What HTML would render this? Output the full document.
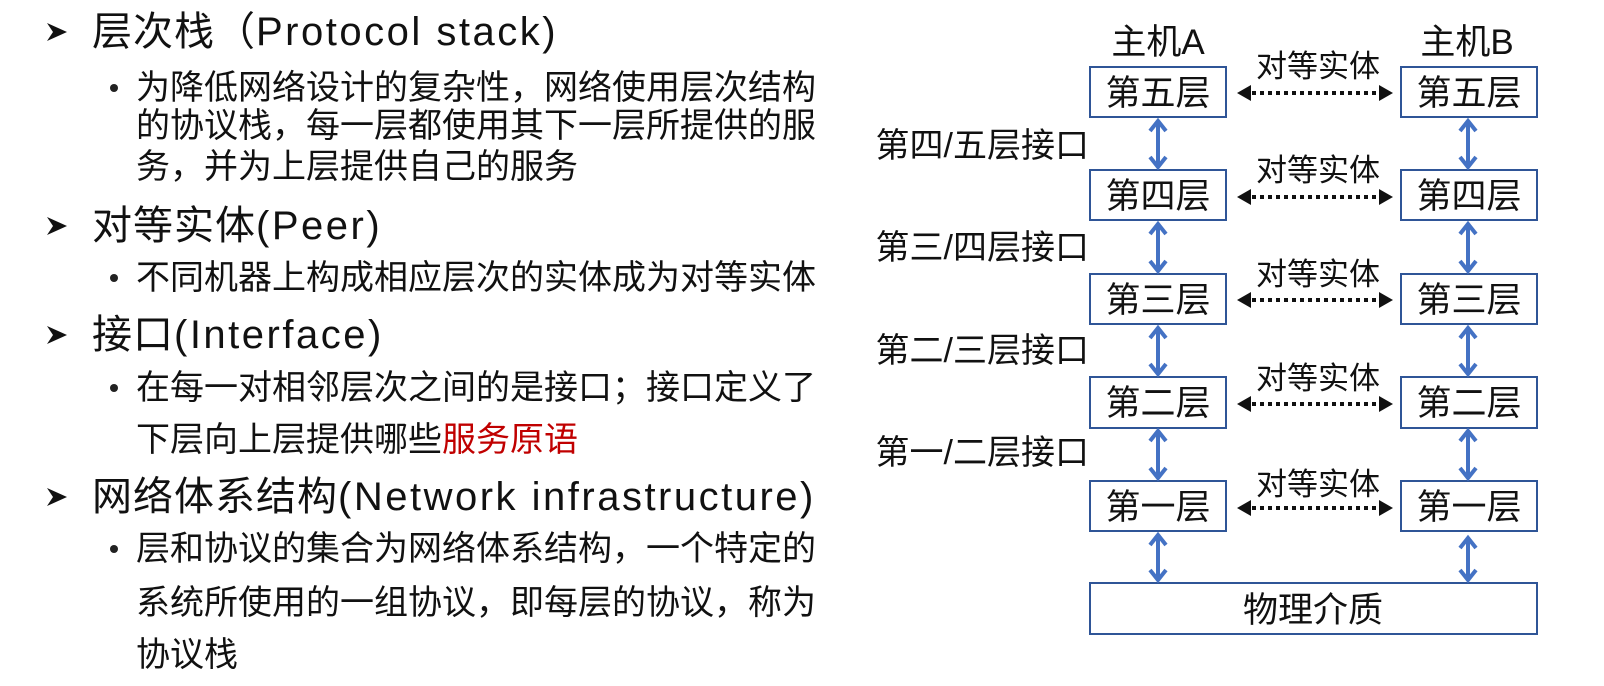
<!DOCTYPE html>
<html><head><meta charset="utf-8"><style>
body{margin:0;width:1604px;height:686px;background:#fff;overflow:hidden;position:relative;font-family:"Liberation Sans","Noto Sans CJK SC",sans-serif;color:#111}
.l{position:absolute;white-space:nowrap}
.h{font-size:40px;line-height:48px;left:92px;letter-spacing:1px}
.h .e{letter-spacing:2.5px}
.b{font-size:34px;line-height:42px;left:136px}
.ar{position:absolute;left:46px;width:22px;height:22px}
.dot{position:absolute;left:110px;width:8px;height:8px;border-radius:50%;background:#222}
</style></head><body>
<svg class="ar" style="top:21px" viewBox="0 0 22 22"><path d="M1 2 L21 11 L1 20 L7 11 Z" fill="#111"/></svg>
<div class="l h" style="top:8px">层次栈（<span class="e">Protocol stack)</span></div>
<div class="dot" style="top:84px"></div>
<div class="l b" style="top:67px">为降低网络设计的复杂性，网络使用层次结构</div>
<div class="l b" style="top:105px">的协议栈，每一层都使用其下一层所提供的服</div>
<div class="l b" style="top:146px">务，并为上层提供自己的服务</div>
<svg class="ar" style="top:215px" viewBox="0 0 22 22"><path d="M1 2 L21 11 L1 20 L7 11 Z" fill="#111"/></svg>
<div class="l h" style="top:202px">对等实体<span class="e">(Peer)</span></div>
<div class="dot" style="top:274px"></div>
<div class="l b" style="top:257px">不同机器上构成相应层次的实体成为对等实体</div>
<svg class="ar" style="top:324px" viewBox="0 0 22 22"><path d="M1 2 L21 11 L1 20 L7 11 Z" fill="#111"/></svg>
<div class="l h" style="top:311px">接口<span class="e">(Interface)</span></div>
<div class="dot" style="top:384px"></div>
<div class="l b" style="top:367px">在每一对相邻层次之间的是接口；接口定义了</div>
<div class="l b" style="top:419px">下层向上层提供哪些<span style="color:#c00000">服务原语</span></div>
<svg class="ar" style="top:486px" viewBox="0 0 22 22"><path d="M1 2 L21 11 L1 20 L7 11 Z" fill="#111"/></svg>
<div class="l h" style="top:473px">网络体系结构<span class="e">(Network infrastructure)</span></div>
<div class="dot" style="top:545px"></div>
<div class="l b" style="top:528px">层和协议的集合为网络体系结构，一个特定的</div>
<div class="l b" style="top:582px">系统所使用的一组协议，即每层的协议，称为</div>
<div class="l b" style="top:634px">协议栈</div>

<svg style="position:absolute;left:0;top:0" width="1604" height="686" font-family="Liberation Sans, Noto Sans CJK SC, sans-serif">
<g fill="#fff" stroke="#2f5597" stroke-width="2">
<rect x="1090" y="67" width="136" height="50"/><rect x="1090" y="170" width="136" height="50"/><rect x="1090" y="274" width="136" height="50"/><rect x="1090" y="377" width="136" height="51"/><rect x="1090" y="481" width="136" height="50"/>
<rect x="1401" y="67" width="136" height="50"/><rect x="1401" y="170" width="136" height="50"/><rect x="1401" y="274" width="136" height="50"/><rect x="1401" y="377" width="136" height="51"/><rect x="1401" y="481" width="136" height="50"/>
<rect x="1090" y="583" width="447" height="51"/>
</g>
<g font-size="35" text-anchor="middle" fill="#111">
<text x="1158" y="105">第五层</text><text x="1158" y="208">第四层</text><text x="1158" y="312">第三层</text><text x="1158" y="415">第二层</text><text x="1158" y="519">第一层</text>
<text x="1469" y="105">第五层</text><text x="1469" y="208">第四层</text><text x="1469" y="312">第三层</text><text x="1469" y="415">第二层</text><text x="1469" y="519">第一层</text>
<text x="1313" y="622">物理介质</text>
<text x="1158" y="54">主机A</text><text x="1467" y="54">主机B</text>
</g>
<g font-size="31" text-anchor="middle" fill="#111">
<text x="1318" y="77">对等实体</text><text x="1318" y="181">对等实体</text><text x="1318" y="285">对等实体</text><text x="1318" y="389">对等实体</text><text x="1318" y="495">对等实体</text>
</g>
<g font-size="34" text-anchor="end" fill="#111">
<text x="1089" y="157">第四/五层接口</text><text x="1089" y="259">第三/四层接口</text><text x="1089" y="362">第二/三层接口</text><text x="1089" y="464">第一/二层接口</text>
</g>
<g stroke="#111" stroke-width="4" stroke-dasharray="4 4" fill="none">
<line x1="1252" y1="93" x2="1378" y2="93"/><line x1="1252" y1="197" x2="1378" y2="197"/><line x1="1252" y1="300" x2="1378" y2="300"/><line x1="1252" y1="404" x2="1378" y2="404"/><line x1="1252" y1="508" x2="1378" y2="508"/>
</g>
<g fill="#111">
<path d="M1237 93 l14 -8 v16 z M1393 93 l-14 -8 v16 z"/>
<path d="M1237 197 l14 -8 v16 z M1393 197 l-14 -8 v16 z"/>
<path d="M1237 300 l14 -8 v16 z M1393 300 l-14 -8 v16 z"/>
<path d="M1237 404 l14 -8 v16 z M1393 404 l-14 -8 v16 z"/>
<path d="M1237 508 l14 -8 v16 z M1393 508 l-14 -8 v16 z"/>
</g>
<g stroke="#4472c4" stroke-width="4" fill="none">
<path d="M1158 121 V167 M1150 131 L1158 121 L1166 131 M1150 157 L1158 167 L1166 157"/>
<path d="M1158 224 V271 M1150 234 L1158 224 L1166 234 M1150 261 L1158 271 L1166 261"/>
<path d="M1158 328 V374 M1150 338 L1158 328 L1166 338 M1150 364 L1158 374 L1166 364"/>
<path d="M1158 431 V478 M1150 441 L1158 431 L1166 441 M1150 468 L1158 478 L1166 468"/>
<path d="M1158 535 V580 M1150 545 L1158 535 L1166 545 M1150 570 L1158 580 L1166 570"/>
<path d="M1468 121 V167 M1460 131 L1468 121 L1476 131 M1460 157 L1468 167 L1476 157"/>
<path d="M1468 224 V271 M1460 234 L1468 224 L1476 234 M1460 261 L1468 271 L1476 261"/>
<path d="M1468 328 V374 M1460 338 L1468 328 L1476 338 M1460 364 L1468 374 L1476 364"/>
<path d="M1468 431 V478 M1460 441 L1468 431 L1476 441 M1460 468 L1468 478 L1476 468"/>
<path d="M1468 538 V580 M1460 548 L1468 538 L1476 548 M1460 570 L1468 580 L1476 570"/>
</g>
</svg>
</body></html>
